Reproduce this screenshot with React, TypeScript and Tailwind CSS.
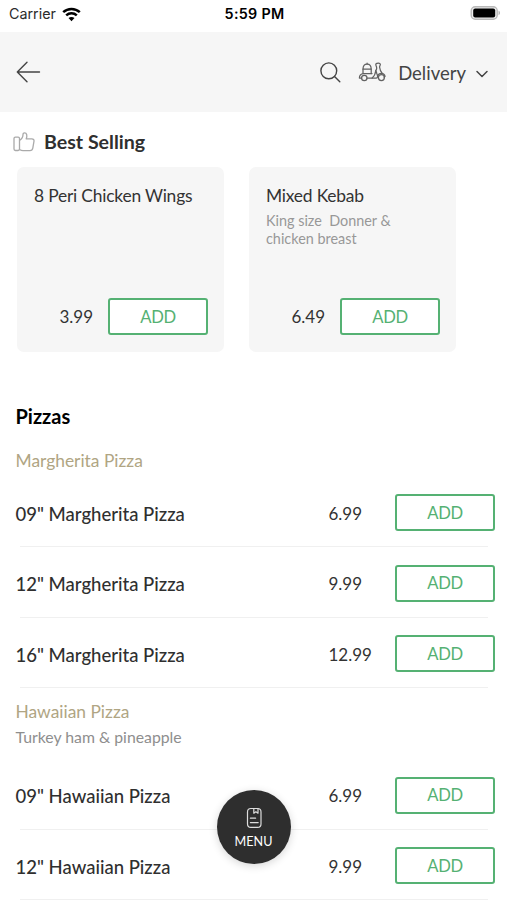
import { clsx } from "clsx";

const bestSelling = [
  { name: "8 Peri Chicken Wings", description: "", price: "3.99" },
  {
    name: "Mixed Kebab",
    description: "King size \u00a0Donner & chicken breast",
    price: "6.49",
  },
];

const pizzas = [
  {
    name: "Margherita Pizza",
    description: "",
    items: [
      { name: '09" Margherita Pizza', price: "6.99" },
      { name: '12" Margherita Pizza', price: "9.99" },
      { name: '16" Margherita Pizza', price: "12.99" },
    ],
  },
  {
    name: "Hawaiian Pizza",
    description: "Turkey ham & pineapple",
    items: [
      { name: '09" Hawaiian Pizza', price: "6.99" },
      { name: '12" Hawaiian Pizza', price: "9.99" },
    ],
  },
];

const StatusBar = () => (
  <div className="flex h-8 items-start justify-between bg-white pt-[5px] pr-[7px] pl-[9px] font-['Inter',sans-serif] text-black">
    <div className="flex w-[100px] items-center gap-[6px]">
      <span className="text-[14.3px] leading-[18px] text-[#2b2b2b]">Carrier</span>
      <svg width="19" height="15" viewBox="0 0 19 15" fill="none" stroke="currentColor" strokeWidth="2.5">
        <path d="M1.2 5.2C5.9.8 13.1.8 17.8 5.2" />
        <path d="M4.2 8.3C7.2 5.5 11.8 5.5 14.8 8.3" />
        <path d="M9.5 14.2 6.5 11C8.2 9.5 10.8 9.5 12.5 11Z" fill="currentColor" stroke="none" />
      </svg>
    </div>
    <span className="text-[14.3px] leading-[18px] font-semibold tracking-[0.3px]">5:59 PM</span>
    <div className="flex w-[100px] justify-end">
      <svg width="31" height="16" viewBox="0 0 31 16">
        <rect x="2.2" y="1.7" width="26" height="12.6" rx="4" fill="#eeeeee" stroke="#b9b9b9" strokeWidth="1.4" />
        <rect x="4.2" y="3.5" width="22" height="9" rx="2" fill="black" />
        <path d="M29.6 5.8c1.6.6 1.6 3.8 0 4.4Z" fill="#a5a5a5" />
      </svg>
    </div>
  </div>
);

const ScooterIcon = () => (
  <svg
    width="28"
    height="20"
    viewBox="0 0 28 20"
    fill="none"
    stroke="#626262"
    strokeWidth="1.25"
    strokeLinecap="round"
    strokeLinejoin="round"
  >
    {/* box and seat */}
    <path d="M5 7.2c0-3 1.8-5 4.1-5s4.1 2 4.1 5Z" />
    <path d="M5 7.2v4.3M13.2 7.2v4.3M9.1 2.1V1.2" />
    {/* body */}
    <path d="M14 11.6H5.5C2.7 11.8 1.4 13.5 1.4 16h2.2M9 16.2h9.2c1.9 0 1.5-2.3.8-4.2l-1.2-3.5c1.1-1.3 1.1-2.8.4-4.4-.6-1.3-.6-2.4.6-2.8 1.2-.3 3.2-.3 3.5.8.3 1-.9 1.7-.7 3.1.3 2.5 1 4.3 2.6 6.2" />
    <path d="M17.8 8.5c-.3 2.8-1.5 5.7-3.6 7.5M19.6 14c1.4-3.6 6.6-3.4 7.5.3l-1 .9" />
    {/* wheels */}
    <circle cx="6.3" cy="16" r="2.7" />
    <circle cx="23.4" cy="15.6" r="3" />
  </svg>
);

const Header = () => (
  <header className="flex h-20 items-center justify-between bg-[#f6f6f6] pr-[18px] pl-4 text-[#444444]">
    <svg
      width="25"
      height="22"
      viewBox="0 0 25 22"
      fill="none"
      stroke="currentColor"
      strokeWidth="1.4"
      strokeLinecap="round"
      strokeLinejoin="round"
    >
      <path d="M23.5 11H1.3M11 1.3 1.3 11l9.7 9.7" />
    </svg>
    <div className="flex items-center">
      <svg width="21" height="21" viewBox="0 0 21 21" fill="none" stroke="currentColor" strokeWidth="1.4" strokeLinecap="round">
        <circle cx="8.8" cy="8.8" r="7.9" />
        <path d="m14.5 14.5 5.3 5.3" />
      </svg>
      <div className="ml-[17px]">
        <ScooterIcon />
      </div>
      <span className="ml-[12px] pt-px text-[18.5px] leading-6">Delivery</span>
      <svg
        className="mt-[4px] ml-[9px]"
        width="14"
        height="9"
        viewBox="0 0 14 9"
        fill="none"
        stroke="currentColor"
        strokeWidth="1.5"
        strokeLinecap="round"
        strokeLinejoin="round"
      >
        <path d="m2 1.5 5 5 5-5" />
      </svg>
    </div>
  </header>
);

const AddButton = () => (
  <button className="h-[37px] w-[100px] shrink-0 rounded-[3px] border-2 border-[#55b173] bg-white text-[16.6px] leading-5 tracking-[-0.4px] text-[#55b173]">
    ADD
  </button>
);

const BestSelling = () => (
  <section className="pt-[18px]">
    <div className="flex items-center gap-[9px] pl-[13px]">
      <svg width="22" height="20" viewBox="0 0 22 20" fill="none" stroke="#aaaaaa" strokeWidth="1.3" strokeLinejoin="round">
        <rect x="1" y="5.2" width="5.5" height="13.3" rx="1.4" />
        <path d="M6.5 8.3C9 7 10 5.3 10 2.6c0-1.1.7-1.8 1.6-1.8 2.3 0 2.8 3.2 1.6 6h5.6c1.6 0 2.4 1 2.2 2.4l-1.2 7c-.3 1.7-1.3 2.5-2.8 2.5H10c-1.5 0-2.4-.5-3.5-1.2" />
      </svg>
      <h2 className="text-[19.6px] leading-6 font-bold text-[#2f2f2f]">Best Selling</h2>
    </div>
    <div className="mt-[13px] flex gap-[25px] pl-[17px]">
      {bestSelling.map((item) => (
        <div
          key={item.name}
          className="flex h-[185px] w-[207px] flex-col justify-between rounded-[7px] bg-[#f6f6f6] pt-[17px] pr-4 pb-[17px] pl-[17px]"
        >
          <div>
            <h3 className="text-[17.4px] leading-[23px] tracking-[-0.2px] text-[#333333]">{item.name}</h3>
            <p className="mt-[5px] text-[14.4px] leading-[18px] text-[#989898]">{item.description}</p>
          </div>
          <div className="flex items-center justify-end gap-[15px]">
            <span className="text-[17px] leading-5 text-[#333333]">{item.price}</span>
            <AddButton />
          </div>
        </div>
      ))}
    </div>
  </section>
);

const MenuRow = ({ name, price }: { name: string; price: string }) => (
  <div className="h-[70.5px] pt-[18px]">
    <div className="flex items-center pr-3 pl-[15.5px]">
      <span className="flex-1 pt-[2px] text-[18.5px] leading-6 font-medium text-[#2f2f2f]">{name}</span>
      <span className="w-[66.5px] pt-[2px] text-[17px] leading-5 text-[#333333]">{price}</span>
      <AddButton />
    </div>
    <div className="mt-[15px] mr-[19px] ml-5 h-px bg-[#f0f0f0]" />
  </div>
);

export default function App() {
  return (
    <main className="relative h-[900px] w-[507px] overflow-hidden bg-white font-['Lato',sans-serif]">
      <StatusBar />
      <Header />
      <BestSelling />
      <section className="pt-[52px]">
        <h2 className="pl-[15.5px] text-[20px] leading-6 font-bold text-black">Pizzas</h2>
        {pizzas.map((group, i) => (
          <div key={group.name} className={clsx(i === 0 ? "pt-[21px]" : "pt-3")}>
            <h3 className="pl-[15.5px] text-[17.4px] leading-6 text-[#b0a583]">{group.name}</h3>
            {group.description ? (
              <p className="mt-[3px] mb-[12px] pl-[15.5px] text-[15.8px] leading-5 text-[#8e8e8e]">{group.description}</p>
            ) : (
              <div className="h-[3px]" />
            )}
            {group.items.map((item) => (
              <MenuRow key={item.name} name={item.name} price={item.price} />
            ))}
          </div>
        ))}
      </section>
      <button className="absolute top-[790px] left-[217px] flex h-[74px] w-[74px] flex-col items-center rounded-full bg-[#2e2e2e] pt-[17px] text-white shadow-[0_2px_9px_rgba(0,0,0,0.16)]">
        <svg width="17" height="22" viewBox="0 0 17 22" fill="none" stroke="#dddddd" strokeWidth="1.2" strokeLinecap="round" strokeLinejoin="round">
          <rect x="1.5" y="1.5" width="13.5" height="18.8" rx="3.4" />
          <path d="M7.8 1.7v4.5l2.1-1.4 2.1 1.4V1.7M4.4 11.2h5.2M4.4 15.6h7.8" />
        </svg>
        <span className="mt-[5px] -ml-px text-[12.6px] leading-4">MENU</span>
      </button>
    </main>
  );
}
